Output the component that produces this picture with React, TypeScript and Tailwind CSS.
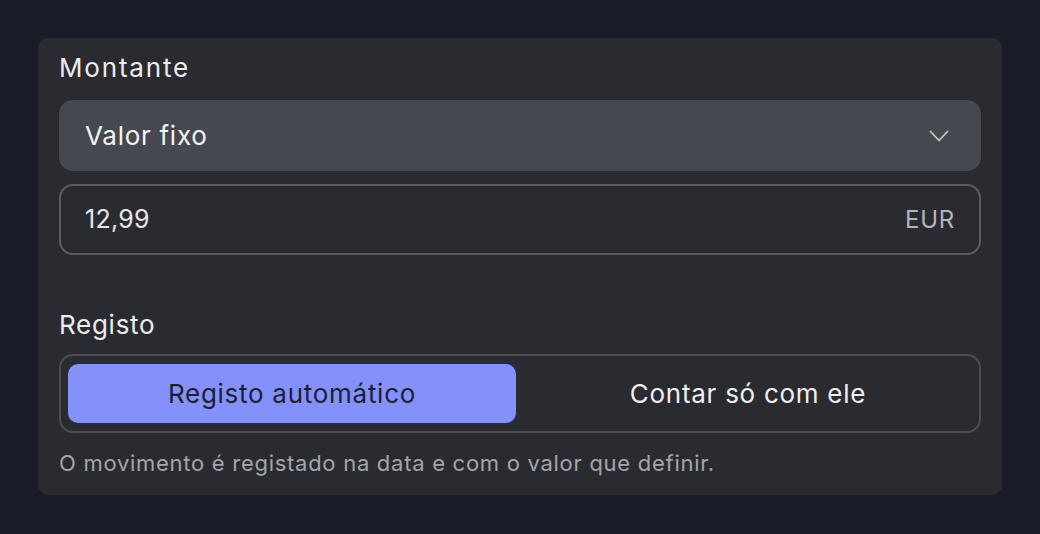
export default function App() {
  return (
    <main
      className="min-h-screen w-full bg-[#1b1c29] pt-[38px] px-[38px] tracking-[0.045em]"
      style={{ fontFamily: "Inter, 'Noto Sans', sans-serif" }}
    >
      <div className="w-[964px] h-[457px] rounded-[10px] bg-[#2a2b30] px-[21px] pt-[12px]">
        {/* Montante */}
        <div className="text-[26px] leading-[36px] tracking-[0.07em] text-[#ececef]">Montante</div>
        <div className="mt-[14px] h-[71px] rounded-[14px] bg-[#45484e] pl-[26px] pr-[32px] flex items-center justify-between">
          <span className="text-[26px] text-[#f3f3f5]">Valor fixo</span>
          <svg width="20" height="13" viewBox="0 0 20 13" fill="none" className="mt-[2px]">
            <polyline
              points="1.5,1.5 10,10.5 18.5,1.5"
              stroke="#c3c5c9"
              strokeWidth="1.8"
              strokeLinecap="round"
              strokeLinejoin="round"
            />
          </svg>
        </div>
        <div className="mt-[13px] h-[71px] rounded-[14px] border-2 border-[#5b5d62] pl-[24px] pr-[24px] flex items-center justify-between">
          <span className="text-[25px] tracking-[0.01em] text-[#e6e6ea]">12,99</span>
          <span className="text-[24px] text-[#b4b5ba]">EUR</span>
        </div>

        {/* Registo */}
        <div className="mt-[52px] text-[26px] leading-[36px] text-[#ececef]">Registo</div>
        <div className="mt-[11px] h-[79px] rounded-[14px] border-2 border-[#4c4e53] px-[7px] py-[8px] flex gap-[8px]">
          <button className="flex-1 rounded-[10px] bg-[#8491fa] text-[26px] text-[#1c1e33] flex items-center justify-center">
            Registo automático
          </button>
          <button className="flex-1 rounded-[10px] text-[26px] text-[#f0f0f3] flex items-center justify-center">
            Contar só com ele
          </button>
        </div>
        <p className="mt-[16px] text-[22px] leading-[28px] text-[#a4a5ab]">
          O movimento é registado na data e com o valor que definir.
        </p>
      </div>
    </main>
  );
}
